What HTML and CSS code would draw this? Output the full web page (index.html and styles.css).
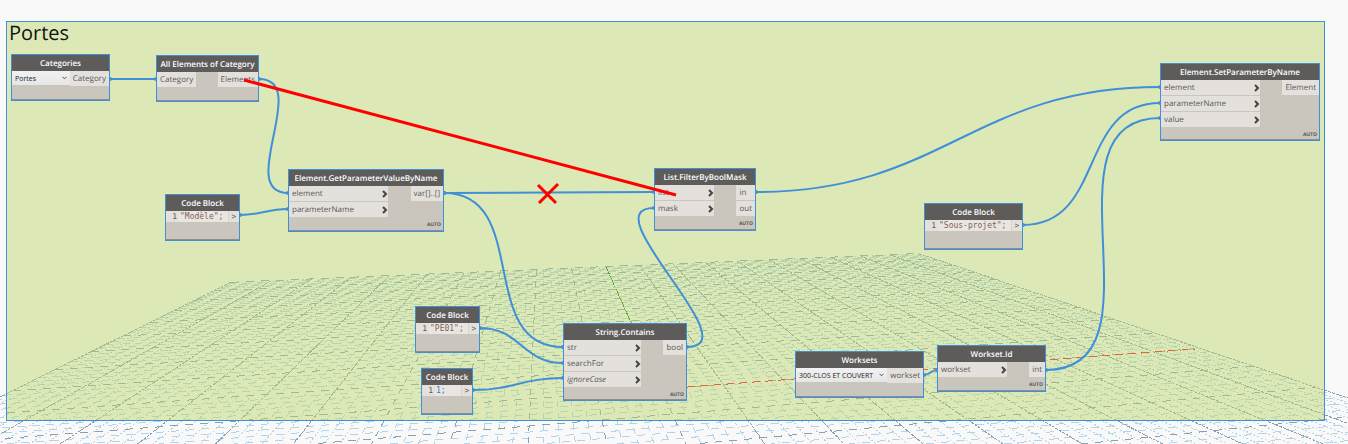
FILE: index.html
```html
<!DOCTYPE html>
<html lang="fr">
<head>
<meta charset="utf-8">
<title>Portes</title>
<link rel="stylesheet" href="styles.css">
</head>
<body>
<main class="workspace">
  <svg class="layer" id="grid" aria-hidden="true"></svg>
  <section class="group"><h1 class="group-title">Portes</h1></section>
  <svg class="layer" id="axes" aria-hidden="true"></svg>
  <svg class="layer" id="wires" aria-hidden="true"></svg>

  <article class="node n-categories">
    <h2 class="node-title">Categories</h2>
    <div class="ports">
      <div class="picker">
        <select class="picker-select" aria-label="Categories"><option>Portes</option></select>
        <svg class="picker-arrow" viewBox="0 0 5 4"><path d="M.5 .8 2.5 2.8 4.5 .8"/></svg>
      </div>
      <div class="outputs"><span class="port">Category</span></div>
    </div>
    <div class="node-foot"></div>
  </article>

  <article class="node n-elements">
    <h2 class="node-title">All Elements of Category</h2>
    <div class="ports">
      <div class="inputs"><span class="port">Category</span></div>
      <div class="outputs"><span class="port">Elements</span></div>
    </div>
    <div class="node-foot"></div>
  </article>

  <article class="node n-getparam">
    <h2 class="node-title">Element.GetParameterValueByName</h2>
    <div class="ports">
      <div class="inputs wide">
        <span class="port">element<svg class="chev" viewBox="0 0 6 8"><path d="M1 1 4 4 1 7"/></svg></span>
        <span class="port">parameterName<svg class="chev" viewBox="0 0 6 8"><path d="M1 1 4 4 1 7"/></svg></span>
      </div>
      <div class="outputs"><span class="port">var[]..[]</span></div>
    </div>
    <div class="node-foot">AUTO</div>
  </article>

  <article class="node code n-modele">
    <h2 class="node-title">Code Block</h2>
    <div class="code-row"><span class="line-no">1</span><input class="code-input" aria-label="Code" value='"Modèle";'><span class="code-out">&gt;</span></div>
    <div class="node-foot"></div>
  </article>

  <article class="node n-filter">
    <h2 class="node-title">List.FilterByBoolMask</h2>
    <div class="ports">
      <div class="inputs mid">
        <span class="port">list<svg class="chev" viewBox="0 0 6 8"><path d="M1 1 4 4 1 7"/></svg></span>
        <span class="port">mask<svg class="chev" viewBox="0 0 6 8"><path d="M1 1 4 4 1 7"/></svg></span>
      </div>
      <div class="outputs"><span class="port">in</span><span class="port">out</span></div>
    </div>
    <div class="node-foot">AUTO</div>
  </article>

  <article class="node code n-pe01">
    <h2 class="node-title">Code Block</h2>
    <div class="code-row"><span class="line-no">1</span><input class="code-input" aria-label="Code" value='"PE01";'><span class="code-out">&gt;</span></div>
    <div class="node-foot"></div>
  </article>

  <article class="node code n-one">
    <h2 class="node-title">Code Block</h2>
    <div class="code-row"><span class="line-no">1</span><input class="code-input number" aria-label="Code" value="1;"><span class="code-out">&gt;</span></div>
    <div class="node-foot"></div>
  </article>

  <article class="node tall n-contains">
    <h2 class="node-title">String.Contains</h2>
    <div class="ports">
      <div class="inputs large">
        <span class="port">str<svg class="chev" viewBox="0 0 6 8"><path d="M1 1 4 4 1 7"/></svg></span>
        <span class="port">searchFor<svg class="chev" viewBox="0 0 6 8"><path d="M1 1 4 4 1 7"/></svg></span>
        <span class="port optional">ignoreCase<svg class="chev" viewBox="0 0 6 8"><path d="M1 1 4 4 1 7"/></svg></span>
      </div>
      <div class="outputs"><span class="port">bool</span></div>
    </div>
    <div class="node-foot">AUTO</div>
  </article>

  <article class="node n-worksets">
    <h2 class="node-title">Worksets</h2>
    <div class="ports">
      <div class="picker">
        <select class="picker-select" aria-label="Worksets"><option>300-CLOS ET COUVERT</option></select>
        <svg class="picker-arrow" viewBox="0 0 5 4"><path d="M.5 .8 2.5 2.8 4.5 .8"/></svg>
      </div>
      <div class="outputs"><span class="port">workset</span></div>
    </div>
    <div class="node-foot"></div>
  </article>

  <article class="node n-id">
    <h2 class="node-title">Workset.Id</h2>
    <div class="ports">
      <div class="inputs medium">
        <span class="port">workset<svg class="chev" viewBox="0 0 6 8"><path d="M1 1 4 4 1 7"/></svg></span>
      </div>
      <div class="outputs"><span class="port">int</span></div>
    </div>
    <div class="node-foot">AUTO</div>
  </article>

  <article class="node code n-projet">
    <h2 class="node-title">Code Block</h2>
    <div class="code-row"><span class="line-no">1</span><input class="code-input" aria-label="Code" value='"Sous-projet";'><span class="code-out">&gt;</span></div>
    <div class="node-foot"></div>
  </article>

  <article class="node tall n-setparam">
    <h2 class="node-title">Element.SetParameterByName</h2>
    <div class="ports">
      <div class="inputs wide">
        <span class="port">element<svg class="chev" viewBox="0 0 6 8"><path d="M1 1 4 4 1 7"/></svg></span>
        <span class="port">parameterName<svg class="chev" viewBox="0 0 6 8"><path d="M1 1 4 4 1 7"/></svg></span>
        <span class="port">value<svg class="chev" viewBox="0 0 6 8"><path d="M1 1 4 4 1 7"/></svg></span>
      </div>
      <div class="outputs"><span class="port">Element</span></div>
    </div>
    <div class="node-foot">AUTO</div>
  </article>

  <svg class="layer markup" aria-hidden="true">
    <path d="M244 80 676 195"/>
    <path d="M538 185 556 203M558 184 539 203"/>
  </svg>
</main>
<script src="scene.js"></script>
</body>
</html>
```
FILE: styles.css
```css
* { box-sizing: border-box; }

body {
  margin: 0;
  background: #f9f9f9;
  font-family: "Open Sans", sans-serif;
  text-rendering: geometricPrecision;
  overflow: hidden;
}

.workspace {
  position: relative;
  min-height: 100vh;
  overflow: hidden;
}

.layer {
  position: absolute;
  inset: 0;
  width: 100%;
  height: 100%;
  fill: none;
  pointer-events: none;
}

.minor { stroke: #b3d3e8; shape-rendering: crispEdges; }
.major { stroke: #8aa0b0; shape-rendering: crispEdges; }
.axis-x { stroke: #e2663a; stroke-dasharray: 8 5; shape-rendering: crispEdges; }
.axis-y { stroke: #4fa82e; stroke-dasharray: 2 1; shape-rendering: crispEdges; }
.wire { stroke: #3f90d8; stroke-width: 2; }
.wire-end { fill: #3f90d8; }
.markup { stroke: #ff0000; stroke-width: 3; }

.group {
  position: absolute;
  left: 6px;
  top: 21px;
  width: 1319px;
  height: 400px;
  border: 1px solid #3f90d8;
  background: rgba(189, 213, 109, 0.47);
}

.group-title {
  margin: 0;
  padding-left: 2px;
  font-size: 20px;
  font-weight: 400;
  line-height: 22px;
  color: #111;
}

.node {
  position: absolute;
  border: 1px solid #3f90d8;
  background: #cac5bd;
  box-shadow: inset 0 -1px #8b8f92;
  color: #5a5857;
  font-size: 8px;
}

.node-title {
  margin: 0;
  height: 16px;
  background: #5e5c5a;
  color: #fff;
  font-size: 8px;
  font-weight: 600;
  line-height: 17px;
  text-align: center;
  white-space: nowrap;
}

.ports {
  display: flex;
  justify-content: space-between;
  align-items: flex-start;
}

.inputs, .outputs {
  display: flex;
  flex-direction: column;
  gap: 1px;
}

.wide { width: 99px; }
.large { width: 77px; }
.medium { width: 69px; }
.mid { width: 59px; }

.port {
  display: flex;
  align-items: center;
  justify-content: space-between;
  height: 15px;
  padding: 0 3px;
  background: #e4e1dd;
  line-height: 14px;
  white-space: nowrap;
}

.optional { font-style: italic; }

.chev {
  width: 6px;
  height: 8px;
  margin-right: -3px;
  fill: none;
  stroke: #454342;
  stroke-width: 2;
}

.node-foot {
  height: 14px;
  padding-right: 2px;
  font-size: 5px;
  font-weight: 700;
  line-height: 16px;
  text-align: right;
}

.tall .node-foot { height: 13px; }

.picker {
  position: relative;
  flex: 1;
}

.picker-select {
  display: block;
  width: 100%;
  height: 14px;
  padding: 0 3px;
  border: 0;
  appearance: none;
  background: linear-gradient(#f1f1f1, #e6e6e6);
  color: #222;
  font: 7px "Open Sans", sans-serif;
}

.picker-arrow {
  position: absolute;
  right: 3px;
  top: 5px;
  width: 5px;
  height: 4px;
  fill: none;
  stroke: #555;
  pointer-events: none;
}

.code-row {
  display: flex;
  height: 11px;
  background: #e4e1dd;
  font: 8px/11px "DejaVu Sans Mono", monospace;
}

.line-no {
  width: 13px;
  padding-right: 2px;
  text-align: right;
}

.code-input {
  flex: 1;
  min-width: 0;
  padding: 0 0 0 1px;
  border: 0;
  background: #e9e6e2;
  color: #806252;
  font: inherit;
}

.number { color: #2c78d0; }

.code-out {
  width: 11px;
  border-left: 1px solid #d8d4cf;
  text-align: center;
}

.code .node-foot { height: 18px; }

.n-categories { left: 11px; top: 54px; width: 99px; }
.n-elements { left: 156px; top: 55px; width: 103px; }
.n-getparam { left: 288px; top: 169px; width: 156px; }
.n-modele { left: 165px; top: 194px; width: 75px; }
.n-filter { left: 654px; top: 168px; width: 102px; }
.n-pe01 { left: 415px; top: 306px; width: 65px; }
.n-one { left: 421px; top: 368px; width: 52px; }
.n-contains { left: 563px; top: 323px; width: 124px; }
.n-worksets { left: 795px; top: 351px; width: 129px; }
.n-id { left: 937px; top: 345px; width: 109px; }
.n-projet { left: 924px; top: 203px; width: 99px; }
.n-setparam { left: 1160px; top: 63px; width: 160px; }
```
FILE: scene.js
```js
const NS = "http://www.w3.org/2000/svg";

function add(parent, tag, attrs) {
  const el = document.createElementNS(NS, tag);
  for (const key in attrs) el.setAttribute(key, attrs[key]);
  document.getElementById(parent).appendChild(el);
}

// Ground plane in perspective: u runs along the red axis, v along the green one.
const origin = [661, 389], vanishU = [4373, 109], vanishV = [543, 127];
function project(u, v) {
  const a = 0.17 * u, b = 0.877 * v, d = 1 + a + b;
  return [0, 1].map(i => (origin[i] + a * vanishU[i] + b * vanishV[i]) / d);
}
function line(p, q) {
  return "M" + p.map(n => n.toFixed(1)) + "L" + q.map(n => n.toFixed(1));
}

const near = -0.4;
for (const major of [false, true]) {
  const cls = major ? "major" : "minor";
  for (let i = -50; i <= 50; i++) {
    if ((i % 5 === 0) !== major) continue;
    const t = i / 50;
    const far = project(t, 1), close = project(t, near);
    const steep = Math.abs(close[0] - far[0]) < 0.6 * Math.abs(close[1] - far[1]);
    const dash = steep ? "6 6" : major ? "3 1" : "2 2";
    add("grid", "path", { class: cls, d: line(far, close), "stroke-dasharray": dash });
    if (t > near) add("grid", "path", { class: cls, d: line(project(-1, t), project(1, t)), "stroke-dasharray": "8 7" });
  }
}
add("axes", "path", { class: "axis-x", d: line(project(0, 0), [1195, 349]) });
add("axes", "path", { class: "axis-y", d: line(project(0, 1), project(0, 0)) });

const wires = [
  [110, 79, 156, 79], [259, 79, 288, 193], [240, 215, 288, 209],
  [444, 193, 654, 192], [444, 193, 563, 347], [480, 328, 563, 363],
  [473, 390, 563, 378], [687, 347, 654, 208], [756, 192, 1160, 87],
  [1023, 225, 1160, 103], [1046, 370, 1160, 118], [924, 375, 937, 370]
];
for (const [x1, y1, x2, y2] of wires) {
  const k = 0.45 * Math.hypot(x2 - x1, y2 - y1);
  add("wires", "path", { class: "wire", d: `M${x1} ${y1}C${x1 + k} ${y1} ${x2 - k} ${y2} ${x2} ${y2}` });
  add("wires", "circle", { class: "wire-end", cx: x1, cy: y1, r: 2 });
  add("wires", "circle", { class: "wire-end", cx: x2, cy: y2, r: 2 });
}
```
